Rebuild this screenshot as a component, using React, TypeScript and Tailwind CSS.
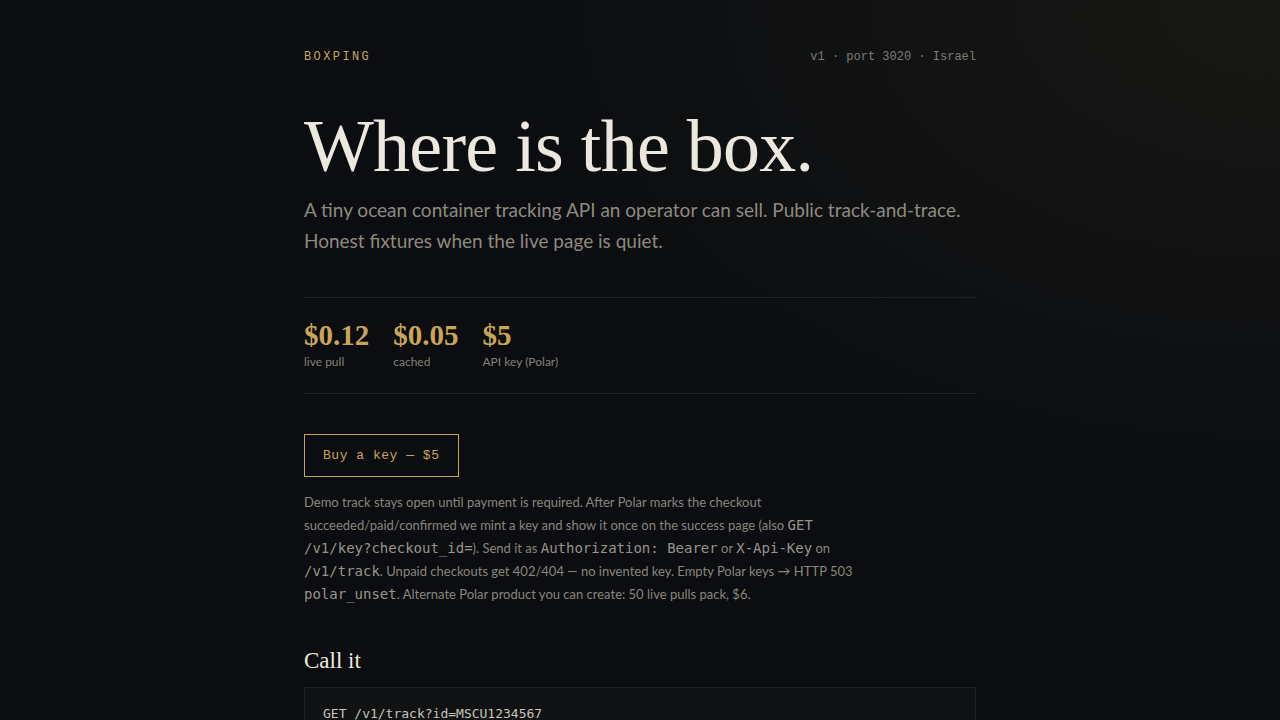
export default function App() {
  const mono = 'font-["Liberation_Mono",monospace]';
  const code = 'font-["DejaVu_Sans_Mono",monospace]';
  return (
    <main className='min-h-screen bg-[#0b0d10] bg-[radial-gradient(ellipse_at_top_right,rgba(201,164,92,0.07),transparent_45%)] font-["Lato",sans-serif]'>
      <div className="max-w-2xl mx-auto pt-[50px] pb-16">
        <header className="flex items-center justify-between">
          <span className={`${mono} text-[12px] leading-[14px] tracking-[0.2em] text-[#c9a55a]`}>BOXPING</span>
          <span className={`${mono} text-[12px] leading-[14px] text-[#7f7b73]`}>v1 · port 3020 · Israel</span>
        </header>

        <h1 className='mt-[46px] font-["Liberation_Serif",serif] text-[74px] leading-[72px] tracking-[-0.01em] text-[#ede8df]'>
          Where is the box.
        </h1>
        <p className="mt-[12px] text-[19px] leading-[31px] text-[#8f8a80]">
          A tiny ocean container tracking API an operator can sell. Public track-and-trace.
          <br />
          Honest fixtures when the live page is quiet.
        </p>

        <div className="mt-[41px] border-y border-[#1f2126] pt-[20px] pb-[21px] flex gap-6">
          <div className="flex flex-col">
            <span className='font-["Liberation_Serif",serif] font-bold text-[29px] leading-[34px] text-[#c9a55a]'>$0.12</span>
            <span className="text-[12px] leading-[20px] text-[#85817a]">live pull</span>
          </div>
          <div className="flex flex-col">
            <span className='font-["Liberation_Serif",serif] font-bold text-[29px] leading-[34px] text-[#c9a55a]'>$0.05</span>
            <span className="text-[12px] leading-[20px] text-[#85817a]">cached</span>
          </div>
          <div className="flex flex-col">
            <span className='font-["Liberation_Serif",serif] font-bold text-[29px] leading-[34px] text-[#c9a55a]'>$5</span>
            <span className="text-[12px] leading-[20px] text-[#85817a]">API key (Polar)</span>
          </div>
        </div>

        <button className={`mt-10 h-[43px] px-[18px] border border-[#c9a55a] ${mono} text-[13px] tracking-[0.04em] text-[#c9a55a]`}>
          Buy a key — $5
        </button>

        <p className="mt-[14px] max-w-[580px] text-[13px] leading-[23px] text-[#8a867e]">
          Demo track stays open until payment is required. After Polar marks the checkout
          <br />
          succeeded/paid/confirmed we mint a key and show it once on the success page (also{' '}
          <code className={`${code} text-[14px] text-[#98948c]`}>GET</code>
          <br />
          <code className={`${code} text-[14px] text-[#98948c]`}>/v1/key?checkout_id=</code>). Send it as{' '}
          <code className={`${code} text-[14px] text-[#98948c]`}>Authorization: Bearer</code> or{' '}
          <code className={`${code} text-[14px] text-[#98948c]`}>X-Api-Key</code> on
          <br />
          <code className={`${code} text-[14px] text-[#98948c]`}>/v1/track</code>. Unpaid checkouts get 402/404 — no invented key. Empty Polar keys → HTTP 503
          <br />
          <code className={`${code} text-[14px] text-[#98948c]`}>polar_unset</code>. Alternate Polar product you can create: 50 live pulls pack, $6.
        </p>

        <h2 className='mt-[41px] font-["Liberation_Serif",serif] text-[23px] leading-[28px] text-[#ede8df]'>Call it</h2>
        <pre className={`mt-[12px] bg-[#101214] border border-[#1d1f23] px-[18px] pt-[16px] pb-[18px] ${code} text-[13px] leading-[20px] text-[#c8c4bb]`}>
          GET /v1/track?id=MSCU1234567
        </pre>
      </div>
    </main>
  );
}
